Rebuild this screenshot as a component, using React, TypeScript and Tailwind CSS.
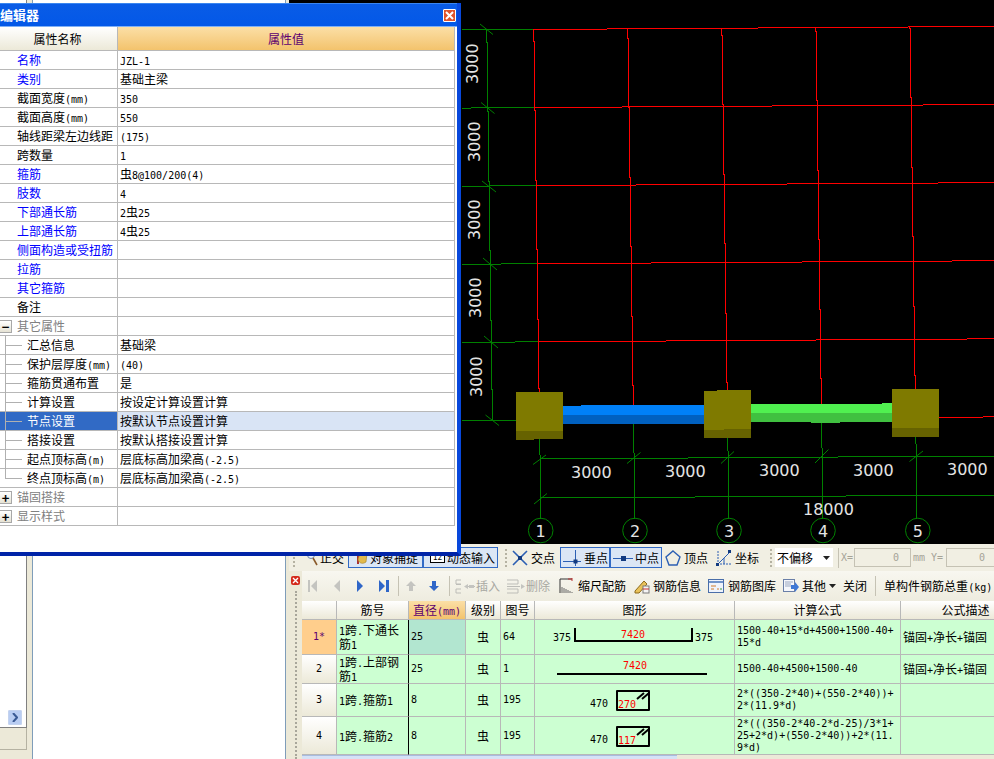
import React from "react";

const Latin = "font-['DejaVu_Sans_Mono'] text-[10px] leading-none";

// SimSun's half-width latin: split runs so digits take 6px like the original
const T: React.FC<{ s: string }> = ({ s }) => (
  <>
    {s.split(/([\x00-\x7f]+)/).map((part, i) =>
      /^[\x00-\x7f]+$/.test(part) ? (
        <span key={i} className={Latin}>
          {part}
        </span>
      ) : (
        part
      )
    )}
  </>
);

type Prop = {
  label: string;
  value?: string;
  blue?: boolean;
  kind?: "open" | "closed" | "child" | "last" | "sel";
};

const props: Prop[] = [
  { label: "名称", value: "JZL-1", blue: true },
  { label: "类别", value: "基础主梁", blue: true },
  { label: "截面宽度(mm)", value: "350" },
  { label: "截面高度(mm)", value: "550" },
  { label: "轴线距梁左边线距", value: "(175)" },
  { label: "跨数量", value: "1" },
  { label: "箍筋", value: "虫8@100/200(4)", blue: true },
  { label: "肢数", value: "4", blue: true },
  { label: "下部通长筋", value: "2虫25", blue: true },
  { label: "上部通长筋", value: "4虫25", blue: true },
  { label: "侧面构造或受扭筋", blue: true },
  { label: "拉筋", blue: true },
  { label: "其它箍筋", blue: true },
  { label: "备注" },
  { label: "其它属性", kind: "open" },
  { label: "汇总信息", value: "基础梁", kind: "child" },
  { label: "保护层厚度(mm)", value: "(40)", kind: "child" },
  { label: "箍筋贯通布置", value: "是", kind: "child" },
  { label: "计算设置", value: "按设定计算设置计算", kind: "child" },
  { label: "节点设置", value: "按默认节点设置计算", kind: "sel" },
  { label: "搭接设置", value: "按默认搭接设置计算", kind: "child" },
  { label: "起点顶标高(m)", value: "层底标高加梁高(-2.5)", kind: "child" },
  { label: "终点顶标高(m)", value: "层底标高加梁高(-2.5)", kind: "last" },
  { label: "锚固搭接", kind: "closed" },
  { label: "显示样式", kind: "closed" },
];

const PropRow: React.FC<{ row: Prop }> = ({ row }) => {
  const { label, value, blue, kind } = row;
  const tree = kind === "child" || kind === "last" || kind === "sel";
  const group = kind === "open" || kind === "closed";
  const sel = kind === "sel";
  return (
    <div className="flex h-[19px] border-b border-[#b8b8b8]">
      <div
        className={`flex h-full w-[118px] shrink-0 items-center border-r border-[#b8b8b8] ${
          sel ? "bg-[#316ac5] text-white" : group ? "text-[#808080]" : blue ? "text-[#0000ff]" : "text-black"
        }`}
      >
        {group ? (
          <span className="flex h-[13px] w-[12px] items-center justify-center border border-l-0 border-[#a8a8a8] bg-gradient-to-b from-white to-[#e6e3d4] text-[13px] leading-none font-bold text-black">
            {kind === "open" ? "−" : "+"}
          </span>
        ) : null}
        {tree ? (
          <span className="relative h-full w-[27px] shrink-0">
            <span className={`absolute top-0 left-[5px] w-px bg-[#b0b0b0] ${kind === "last" ? "h-[9px]" : "h-[19px]"}`} />
            <span className="absolute top-[9px] left-[5px] h-px w-[17px] bg-[#b0b0b0]" />
          </span>
        ) : null}
        <span className={`whitespace-pre ${group ? "ml-[5px]" : tree ? "" : "ml-[17px]"}`}>
          <T s={label} />
        </span>
      </div>
      <div className={`flex flex-1 items-center pl-[2px] whitespace-pre ${sel ? "bg-[#d9e4f5]" : ""}`}>
        {value ? (
          <span>
            <T s={value} />
          </span>
        ) : null}
      </div>
    </div>
  );
};

const EditorDialog = () => (
  <div className="absolute top-[3px] left-0 flex h-[553px] w-[461px] flex-col border-r-[4px] border-b-[4px] border-r-[#0848dc] border-b-[#0024a8]">
    <div className="flex h-[23px] shrink-0 items-center justify-between border-t border-[#3a86f0] bg-gradient-to-b from-[#0a5ce6] to-[#0358e8] pr-[1px]">
      <span className="text-[13px] font-bold text-white">编辑器</span>
      <span className="flex h-[13px] w-[13px] items-center justify-center rounded-[1px] border border-white bg-[#e0542c]">
        <svg viewBox="0 0 9 9" className="h-[9px] w-[9px]">
          <path d="M1 1 L8 8 M8 1 L1 8" stroke="#fff" strokeWidth="2" />
        </svg>
      </span>
    </div>
    <div className="flex-1 border-t border-[#7fb0f5] bg-white pr-[2px]">
      <div className="border-r border-[#b8b8b8]">
        <div className="flex h-[24px] border-b border-[#b8b8b8]">
          <div className="flex w-[118px] shrink-0 items-center justify-center border-r border-[#b8b8b8] bg-gradient-to-b from-white to-[#ece9d8] pr-[2px]">
            属性名称
          </div>
          <div className="flex flex-1 items-center justify-center bg-gradient-to-b from-[#fbdfa6] to-[#f3c36c] text-[#5c0070]">
            属性值
          </div>
        </div>
        {props.map((row) => (
          <PropRow key={row.label} row={row} />
        ))}
      </div>
    </div>
  </div>
);

// one px jog every ~69px, the way the grid was rasterised
const jogV = (x: number, top: number, firstBreak: number, end: number) => {
  let d = `M${x} ${top}`;
  let cx = x;
  let y = firstBreak;
  while (y < end) {
    d += ` V${Math.round(y)} H${cx + 1}`;
    cx += 1;
    y += 69.4;
  }
  return d + ` V${end}`;
};

const redH = [
  "M533 29.5 H607 M607 28.5 H758 M758 27.5 H908 M908 26.5 H994",
  "M534 107.5 H622 M622 106.5 H772 M772 105.5 H923 M923 104.5 H994",
  "M536 185.5 H636 M636 184.5 H787 M787 183.5 H938 M938 182.5 H994",
  "M537 263.5 H651 M651 262.5 H802 M802 261.5 H952 M952 260.5 H994",
  "M538 341.5 H666 M666 340.5 H816 M816 339.5 H967 M967 338.5 H994",
  "M939 417.5 H983 M983 416.5 H994",
];

const greenLines = [
  "M462 29.5 H533",
  "M462 108.5 H471 M471 107.5 H534",
  "M462 186.5 H490 M490 185.5 H536",
  "M462 264.5 H501 M501 263.5 H537",
  "M462 342.5 H515 M515 341.5 H538",
  "M462 420.5 H516",
  "M539.5 439 V455 M540.5 455 V519",
  "M633.5 424 V453 M634.5 453 V519",
  "M727.5 438 V451 M728.5 451 V519",
  "M821.5 423 V448 M822.5 448 V519",
  "M915.5 437 V444 M916.5 444 V519",
  "M540 458.5 H688 M688 457.5 H838 M838 456.5 H994",
  "M541 497.5 H695 M695 496.5 H846 M846 495.5 H994",
];

const ticks = [
  "M480 24 L493 34.5",
  "M481 102.5 L494.5 113.5",
  "M482 181 L496 192",
  "M483 258 L497 270",
  "M484 336 L498 348",
  "M485.5 415 L499 425.5",
  "M533 464.5 L546 455",
  "M627 463.5 L640.5 452.5",
  "M721 463.5 L734 451.5",
  "M815 463 L828.5 449.5",
  "M909.5 461.5 L923 451",
  "M534 504 L547 493.5",
];

const sideDims: [number, number][] = [
  [478, 84],
  [479.5, 162],
  [480, 240],
  [481, 318],
  [482, 397],
];

const bottomDims: [number, number][] = [
  [571, 478],
  [665, 477],
  [759, 476],
  [853, 476],
  [947, 475],
];

const axes: [number, string][] = [
  [540.7, "1"],
  [635, "2"],
  [729, "3"],
  [823, "4"],
  [917.8, "5"],
];

const Canvas = () => (
  <svg viewBox="289 0 705 544" className="ml-[3px] block h-[544px] w-[705px] shrink-0 bg-black">
    <g fill="none" stroke="#ff0000" shapeRendering="crispEdges">
      {redH.map((d) => (
        <path key={d} d={d} />
      ))}
      <path d={jogV(533.5, 29, 41, 392)} />
      <path d={jogV(627.5, 29, 38, 405)} />
      <path d={jogV(721.5, 29, 35, 390)} />
      <path d={jogV(815.5, 27, 31, 404)} />
      <path d={jogV(909.5, 26, 28, 389)} />
    </g>
    <g fill="none" stroke="#008000" shapeRendering="crispEdges">
      {greenLines.map((d) => (
        <path key={d} d={d} />
      ))}
      <path d={jogV(486.5, 29, 42, 421)} />
    </g>
    <g fill="none" stroke="#008000">
      {ticks.map((d) => (
        <path key={d} d={d} />
      ))}
      {axes.map(([x]) => (
        <circle key={x} cx={x} cy={530.5} r={12.3} />
      ))}
    </g>
    <g shapeRendering="crispEdges">
      <rect x="563" y="406" width="18" height="10" fill="#0080f8" />
      <rect x="581" y="405" width="123" height="10" fill="#0080f8" />
      <rect x="563" y="415" width="141" height="9" fill="#0060c0" />
      <rect x="751" y="404" width="141" height="10" fill="#50f050" />
      <rect x="882" y="403" width="10" height="2" fill="#50f050" />
      <rect x="751" y="413" width="141" height="9" fill="#40c040" />
      <rect x="811" y="422" width="29" height="1" fill="#40c040" />

      <rect x="516" y="392" width="47" height="39" fill="#7f7a00" />
      <rect x="516" y="431" width="47" height="8" fill="#666200" />
      <rect x="516" y="439" width="18" height="1" fill="#666200" />

      <rect x="704" y="391" width="20" height="39" fill="#7f7a00" />
      <rect x="717" y="390" width="34" height="39" fill="#7f7a00" />
      <rect x="704" y="430" width="20" height="8" fill="#666200" />
      <rect x="724" y="429" width="27" height="9" fill="#666200" />

      <rect x="892" y="389" width="47" height="39" fill="#7f7a00" />
      <rect x="892" y="428" width="47" height="9" fill="#666200" />
    </g>
    <g fill="#e4e4e4" className="font-['DejaVu_Sans'] text-[16px]">
      {sideDims.map(([x, y]) => (
        <text key={y} transform={`translate(${x} ${y}) rotate(-90)`}>
          3000
        </text>
      ))}
      {bottomDims.map(([x, y]) => (
        <text key={x} x={x} y={y}>
          3000
        </text>
      ))}
      <text x="803" y="515">
        18000
      </text>
      {axes.map(([x, n]) => (
        <text key={n} x={x} y={536.5} textAnchor="middle">
          {n}
        </text>
      ))}
    </g>
  </svg>
);

const Grip = ({ className = "" }: { className?: string }) => (
  <span className={`h-[18px] w-[2px] shrink-0 border-l-2 border-dotted border-[#b5b2a2] ${className}`} />
);

const Sep = ({ className = "" }: { className?: string }) => (
  <span className={`h-[20px] w-px shrink-0 bg-[#c5c2b4] ${className}`} />
);

const ICON = "#2c5fb3";

const ToggleBtn: React.FC<{ w: string; children: React.ReactNode }> = ({ w, children }) => (
  <span className={`flex h-[21px] shrink-0 items-center border border-[#316ac5] bg-[#dbe6f5] ${w}`}>{children}</span>
);

const SnapBar = () => (
  <div className="flex h-[27px] shrink-0 items-center bg-[#f1efe3] whitespace-nowrap">
    <Grip className="ml-[4px]" />
    <span className="ml-[5px] flex w-[48px] shrink-0 items-center">
      <svg viewBox="0 0 12 16" className="ml-[6px] h-[16px] w-[12px] shrink-0">
        <circle cx="5" cy="5" r="3.5" fill="#eaf1fb" stroke="#6f86a8" />
        <path d="M7 8 L11 15" stroke="#8a5a2a" strokeWidth="1.6" />
      </svg>
      <span className="ml-[2px]">正交</span>
    </span>
    <ToggleBtn w="w-[75px]">
      <svg viewBox="0 0 16 16" className="ml-[3px] h-[16px] w-[16px]">
        <path d="M5 3 H1 V1 H9 V3 H7 V14 H5Z" fill="#a33" />
        <path d="M6 10 C6 5 11 2 15 3 L14 12 C11 14 8 14 6 10Z" fill="#e2b94c" stroke="#a07c20" strokeWidth="0.6" />
      </svg>
      <span className="ml-[2px]">对象捕捉</span>
    </ToggleBtn>
    <ToggleBtn w="w-[75px]">
      <span className="ml-[6px] flex h-[10px] w-[15px] items-center justify-center border border-black bg-white font-['DejaVu_Sans_Mono'] text-[8px] leading-none">
        12
      </span>
      <span className="ml-[2px]">动态输入</span>
    </ToggleBtn>
    <Grip className="ml-[7px]" />
    <span className="ml-[5px] flex w-[48px] shrink-0 items-center">
      <svg viewBox="0 0 16 16" className="h-[16px] w-[16px]">
        <path d="M1 1 L15 15 M15 1 L1 15" stroke={ICON} strokeWidth="1.6" />
        <rect x="6" y="6" width="4" height="4" fill="#123a80" />
      </svg>
      <span className="ml-[3px]">交点</span>
    </span>
    <ToggleBtn w="w-[50px]">
      <svg viewBox="0 0 18 16" className="ml-[2px] h-[16px] w-[18px]">
        <path d="M0 11.5 H18 M12.5 0 V16" stroke={ICON} strokeWidth="1" />
        <rect x="10.5" y="9.5" width="4" height="4" fill="#123a80" />
      </svg>
      <span className="ml-[3px]">垂点</span>
    </ToggleBtn>
    <ToggleBtn w="w-[52px]">
      <svg viewBox="0 0 20 8" className="ml-[2px] h-[8px] w-[20px]">
        <path d="M0 4.5 H20" stroke={ICON} strokeWidth="1" />
        <rect x="8" y="2" width="5" height="5" fill="#123a80" />
      </svg>
      <span className="ml-[2px]">中点</span>
    </ToggleBtn>
    <svg viewBox="0 0 16 16" className="ml-[3px] h-[16px] w-[16px] shrink-0">
      <path d="M8 1 L15 7 L12 15 H4 L1 7Z" fill="none" stroke={ICON} strokeWidth="1.4" />
    </svg>
    <span className="ml-[3px] w-[29px] shrink-0">顶点</span>
    <svg viewBox="0 0 18 18" className="ml-[2px] h-[18px] w-[18px] shrink-0">
      <path d="M3 2 V15 H16" fill="none" stroke={ICON} strokeWidth="1" strokeDasharray="2 1" />
      <path d="M3 15 L9 9 L15 3 M9 9 V15" fill="none" stroke={ICON} strokeWidth="1" />
      <rect x="13" y="1" width="3" height="3" fill="#123a80" />
      <rect x="1" y="14" width="3" height="3" fill="#123a80" />
    </svg>
    <span className="ml-[2px] w-[31px] shrink-0">坐标</span>
    <Grip className="ml-[4px]" />
    <span className="ml-[3px] flex h-[19px] w-[58px] shrink-0 items-center justify-between bg-white pr-[3px] pl-[2px]">
      不偏移
      <svg viewBox="0 0 7 4" className="h-[4px] w-[7px]">
        <path d="M0 0 H7 L3.5 4Z" fill="#222" />
      </svg>
    </span>
    <Sep className="ml-[5px]" />
    <span className={`ml-[2px] w-[13px] shrink-0 text-[#a5a397] ${Latin}`}>X=</span>
    <span className="flex h-[19px] w-[57px] shrink-0 items-center justify-end border border-[#c5c2b4] pr-[11px] text-[#a5a397]">
      <span className={Latin}>0</span>
    </span>
    <span className={`ml-[2px] w-[18px] shrink-0 text-[#a5a397] ${Latin}`}>mm</span>
    <span className={`w-[15px] shrink-0 text-[#a5a397] ${Latin}`}>Y=</span>
    <span className="flex h-[19px] w-[80px] shrink-0 items-center justify-end border border-[#c5c2b4] pr-[40px] text-[#a5a397]">
      <span className={Latin}>0</span>
    </span>
  </div>
);

const Nav: React.FC<{ d: string; on?: boolean; className: string }> = ({ d, on, className }) => (
  <svg viewBox="0 0 12 12" className={`h-[12px] w-[12px] shrink-0 ${className}`}>
    <path d={d} fill={on ? "#2f66c8" : "#c4c4c0"} />
  </svg>
);

const ActionBar = () => (
  <div className="flex h-[30px] shrink-0 items-center bg-gradient-to-b from-[#f8f7f0] to-[#eeecdf] whitespace-nowrap">
    <Nav d="M1 0 H3 V12 H1Z M10 0 V12 L4 6Z" className="ml-[5px]" />
    <Nav d="M9 0 V12 L3 6Z" className="ml-[12px]" />
    <Nav d="M3 0 V12 L9 6Z" on className="ml-[11px]" />
    <Nav d="M1 0 V12 L7 6Z M8 0 H11 V12 H8Z" on className="ml-[12px]" />
    <Sep className="ml-[8px]" />
    <Nav d="M6 1 L11 6 H8 V11 H4 V6 H1Z" className="ml-[6px]" />
    <Nav d="M6 11 L11 6 H8 V1 H4 V6 H1Z" on className="ml-[11px]" />
    <Sep className="ml-[9px]" />
    <svg viewBox="0 0 20 16" className="ml-[5px] h-[16px] w-[20px] shrink-0">
      <path d="M6 2 H1 V6 H6 M6 11 H1 V15 H6 M6 6.5 H1 M20 8.5 H12 L10 8.5" fill="none" stroke="#bdbdb8" />
      <path d="M13 6 V11 L9 8.5Z M14 7 H19 V10 H14Z" fill="#c4c4c0" />
    </svg>
    <span className="ml-[1px] shrink-0 text-[#a8a8a2]">插入</span>
    <svg viewBox="0 0 20 16" className="ml-[6px] h-[16px] w-[20px] shrink-0">
      <path d="M1 2 H12 V6 H1 M1 11 H12 V15 H1 M1 8.5 H14" fill="none" stroke="#bdbdb8" />
      <path d="M15 6 V11 L19 8.5Z" fill="#c4c4c0" />
    </svg>
    <span className="shrink-0 text-[#a8a8a2]">删除</span>
    <svg viewBox="0 0 16 16" className="ml-[9px] h-[16px] w-[16px] shrink-0">
      <path d="M1 1 V15 M1 1 H13" fill="none" stroke="#333" />
      <path d="M9 1 L13 1 M13 0 V3" stroke="#b33" />
      <path d="M3 9 V15 M5 10 V15 M7 11 V15 M9 12 V15 M11 13 V15 M13 14 V15" stroke="#666" />
    </svg>
    <span className="ml-[3px] shrink-0">缩尺配筋</span>
    <svg viewBox="0 0 16 16" className="ml-[8px] h-[16px] w-[16px] shrink-0">
      <path d="M1 13 L10 3 L13 6 L5 15 L1 15Z" fill="#e9c25a" stroke="#8c6a1c" />
      <rect x="9" y="8" width="6" height="7" fill="#f4f4f4" stroke="#7a7a7a" />
      <path d="M9 11 H15" stroke="#c33" />
    </svg>
    <span className="ml-[3px] shrink-0">钢筋信息</span>
    <svg viewBox="0 0 16 14" className="ml-[7px] h-[14px] w-[16px] shrink-0">
      <rect x="0.5" y="0.5" width="15" height="13" fill="#eef3fb" stroke="#4a6ea9" />
      <path d="M1 2 H15 V4 H1Z" fill="#6f93c9" />
      <path d="M3 7 H8 M3 10 H6 M9 10 H11" stroke="#d07a2a" />
      <path d="M12 10 H14" stroke="#3a9a3a" />
    </svg>
    <span className="ml-[4px] shrink-0">钢筋图库</span>
    <svg viewBox="0 0 16 16" className="ml-[7px] h-[16px] w-[16px] shrink-0">
      <rect x="0.5" y="1.5" width="11" height="12" fill="#f4f6fb" stroke="#6a7fa8" />
      <path d="M2 4 H10 M2 6 H8 M2 8 H8" stroke="#9aa7c0" />
      <path d="M8 7 H12 V4 L16 9 L12 14 V11 H8Z" fill="#3f78d6" />
    </svg>
    <span className="ml-[3px] shrink-0">其他</span>
    <svg viewBox="0 0 7 4" className="ml-[3px] h-[4px] w-[7px] shrink-0">
      <path d="M0 0 H7 L3.5 4Z" fill="#222" />
    </svg>
    <span className="ml-[7px] shrink-0">关闭</span>
    <Sep className="ml-[8px]" />
    <span className="ml-[8px] shrink-0">
      <T s="单构件钢筋总重(kg)" />
    </span>
  </div>
);

const cols = "grid grid-rows-1 grid-cols-[35px_72px_57px_35px_34px_200px_166px_130px]";
const cell = "flex min-h-0 items-center overflow-hidden border-r border-b border-[#b8b8b8]";

type Bar = {
  no: string;
  name: string;
  dia: string;
  fig: string;
  shape: React.ReactNode;
  formula: string;
  desc?: string;
  h: string;
  active?: boolean;
};

const Hoop = ({ n }: { n: string }) => (
  <svg viewBox="0 0 200 30" className="h-[30px] w-[200px] shrink-0">
    <text x="55" y="22" className={Latin}>
      470
    </text>
    <path d="M82 6 H114 V25 H82Z" fill="none" stroke="#000" strokeWidth="2" strokeLinejoin="round" />
    <path d="M102 14 L109 8 M107 14 L114 8" stroke="#000" strokeWidth="2" />
    <text x="83" y="23" fill="#ff0000" className={Latin}>
      {n}
    </text>
  </svg>
);

const bars: Bar[] = [
  {
    no: "1*",
    name: "1跨.下通长\n筋1",
    dia: "25",
    fig: "64",
    h: "h-[35px]",
    active: true,
    formula: "1500-40+15*d+4500+1500-40+\n15*d",
    desc: "锚固+净长+锚固",
    shape: (
      <svg viewBox="0 0 200 24" className="h-[24px] w-[200px] shrink-0">
        <text x="18" y="16" className={Latin}>
          375
        </text>
        <path d="M40 3 V16 H157 V3" fill="none" stroke="#000" strokeWidth="2" />
        <text x="86" y="13" fill="#ff0000" className={Latin}>
          7420
        </text>
        <text x="160" y="16" className={Latin}>
          375
        </text>
      </svg>
    ),
  },
  {
    no: "2",
    name: "1跨.上部钢\n筋1",
    dia: "25",
    fig: "1",
    h: "h-[29px]",
    formula: "1500-40+4500+1500-40",
    desc: "锚固+净长+锚固",
    shape: (
      <svg viewBox="0 0 200 20" className="h-[20px] w-[200px] shrink-0">
        <path d="M22 15 H172" stroke="#000" strokeWidth="2" />
        <text x="88" y="10" fill="#ff0000" className={Latin}>
          7420
        </text>
      </svg>
    ),
  },
  {
    no: "3",
    name: "1跨.箍筋1",
    dia: "8",
    fig: "195",
    h: "h-[33px]",
    formula: "2*((350-2*40)+(550-2*40))+\n2*(11.9*d)",
    shape: <Hoop n="270" />,
  },
  {
    no: "4",
    name: "1跨.箍筋2",
    dia: "8",
    fig: "195",
    h: "h-[38px]",
    formula: "2*(((350-2*40-2*d-25)/3*1+\n25+2*d)+(550-2*40))+2*(11.\n9*d)",
    shape: <Hoop n="117" />,
  },
];

const headCell = `${cell} justify-center bg-gradient-to-b from-white to-[#ece9d8]`;
const headers = ["", "筋号", "直径(mm)", "级别", "图号", "图形", "计算公式", "公式描述"];

const BarTable = () => (
  <div className="min-h-0 flex-1 overflow-hidden">
    <div className={`${cols} h-[19px] w-[729px]`}>
      {headers.map((h, i) => (
        <div
          key={i}
          className={
            i === 2
              ? `${cell} justify-center bg-gradient-to-b from-[#fbdfa6] to-[#f3c36c] text-[#5c0070]`
              : headCell
          }
        >
          <span className="whitespace-nowrap">
            <T s={h} />
          </span>
        </div>
      ))}
    </div>
    {bars.map((b) => (
      <div key={b.no} className={`${cols} w-[729px] bg-[#ccffd2] ${b.h}`}>
        <div
          className={`${cell} justify-center ${
            b.active
              ? "bg-[#ffce8c] text-[#5c0070]"
              : "bg-gradient-to-b from-white to-[#ece9d8]"
          }`}
        >
          <span className={Latin}>{b.no}</span>
        </div>
        <div className={`${cell} border-r-black pl-[2px] leading-[14px] whitespace-pre-line`}>
          <span>
            <T s={b.name} />
          </span>
        </div>
        <div className={`${cell} pl-[2px] ${b.active ? "bg-[#b2e6d0]" : ""}`}>
          <span className={Latin}>{b.dia}</span>
        </div>
        <div className={`${cell} justify-center`}>虫</div>
        <div className={`${cell} pl-[2px]`}>
          <span className={Latin}>{b.fig}</span>
        </div>
        <div className={cell}>{b.shape}</div>
        <div className={`${cell} pl-[2px] font-['DejaVu_Sans_Mono'] text-[10px] leading-[12px] whitespace-pre-line`}>
          {b.formula}
        </div>
        <div className={`${cell} pl-[2px]`}>
          <span className="whitespace-nowrap">{b.desc ? <T s={b.desc} /> : null}</span>
        </div>
      </div>
    ))}
  </div>
);

const BottomPane = () => (
  <div className="ml-[3px] flex min-h-0 flex-1">
    <div className="flex w-[13px] shrink-0 flex-col items-center pt-[5px]">
      <span className="flex h-[9px] w-[9px] items-center justify-center rounded-[2px] bg-[#d42a1c]">
        <svg viewBox="0 0 7 7" className="h-[7px] w-[7px]">
          <path d="M1 1 L6 6 M6 1 L1 6" stroke="#fff" strokeWidth="1.4" />
        </svg>
      </span>
      <span className="mt-[6px] w-[2px] flex-1 border-l-2 border-dotted border-[#a8a69a]" />
    </div>
    <div className="flex min-w-0 flex-1 flex-col">
      <ActionBar />
      <BarTable />
      <div className="flex h-[4px] shrink-0">
        <span className="w-[375px] border-t border-[#a8bce0] bg-[#d6e2f6]" />
      </div>
    </div>
  </div>
);

const App = () => (
  <div className="relative flex h-[759px] w-[994px] overflow-hidden bg-[#ece9d8] font-['Noto_Sans_CJK_SC',sans-serif] text-[12px] leading-[14px] text-black">
    <div className="flex w-[27px] shrink-0 flex-col">
      <div className="flex h-[728px] shrink-0 flex-col justify-end border-r border-b border-[#808080] bg-white pb-[2px] pl-[8px]">
        <span className="flex h-[15px] w-[14px] items-center justify-center rounded-[1px] border border-[#c4d3ef] bg-[#b9cdf2]">
          <svg viewBox="0 0 6 9" className="h-[9px] w-[6px]">
            <path d="M1 0 L5 4.5 L1 9" fill="none" stroke="#3a5a94" strokeWidth="2" />
          </svg>
        </span>
      </div>
      <div className="h-[22px] border-r border-b border-[#b5b2a2]" />
    </div>
    <div className="w-[5px] shrink-0 bg-[#ece9d8]" />
    <div className="w-[254px] shrink-0 border-x border-[#7f9db9] bg-white" />
    <div className="flex min-w-0 flex-1 flex-col">
      <Canvas />
      <div className="ml-[3px] flex shrink-0 flex-col">
        <SnapBar />
      </div>
      <BottomPane />
    </div>
    <EditorDialog />
  </div>
);

export default App;
